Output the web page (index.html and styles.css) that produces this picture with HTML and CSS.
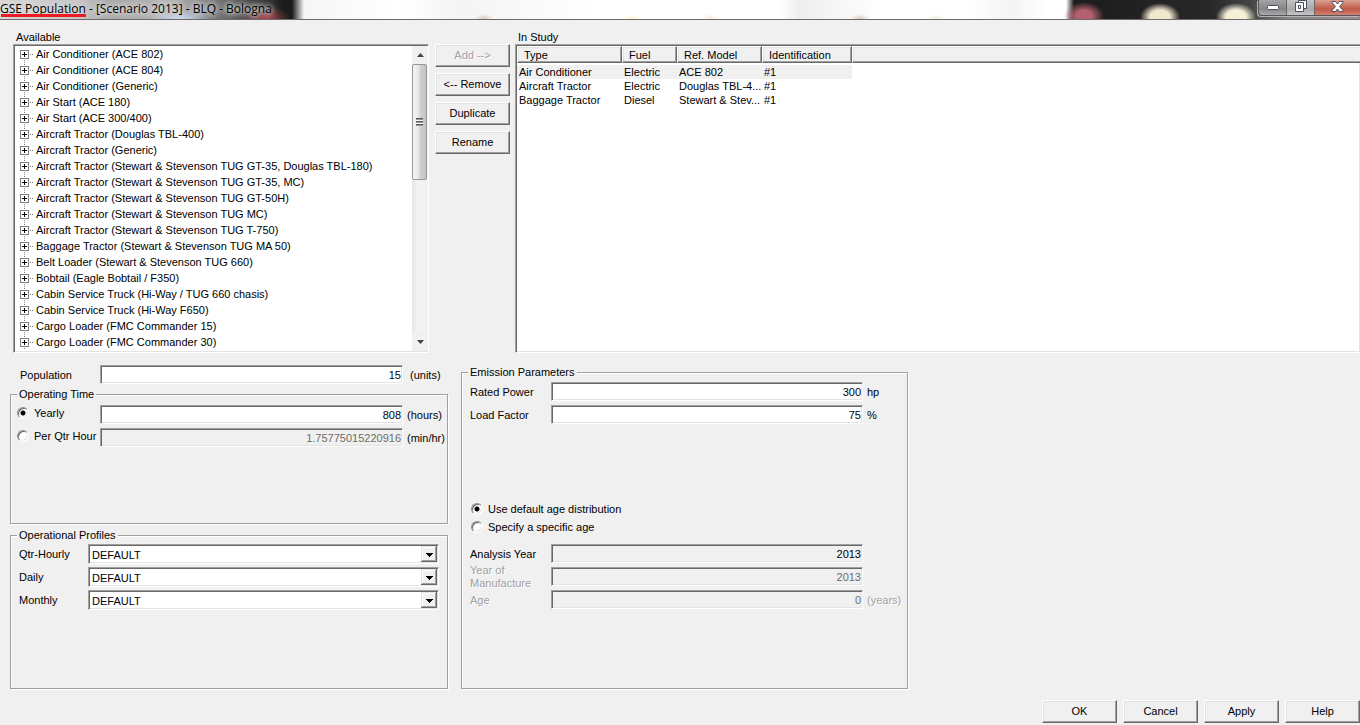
FILE: index.html
```html
<!DOCTYPE html>
<html lang="en">
<head>
<meta charset="utf-8">
<title>GSE Population - [Scenario 2013] - BLQ - Bologna</title>
<link rel="stylesheet" href="styles.css">
</head>
<body>
<header class="titlebar">
  <h1 class="title"><span class="marked">GSE Population</span> - [Scenario 2013] - BLQ - Bologna</h1>
  <div class="window-controls">
    <button class="win-btn win-min" aria-label="Minimize"><svg width="12" height="6" viewBox="0 0 12 6"><rect x=".5" y=".5" width="11" height="4" rx="1" fill="#fff" stroke="#4a4e60"/></svg></button>
    <button class="win-btn win-restore" aria-label="Restore"><svg width="12" height="12" viewBox="0 0 12 12" fill="#fff" stroke="#4a4e60"><path d="M3.500.5h8v8h-8z"/><path fill-rule="evenodd" d="M.5 2.500h8v9h-8zM3.500 5.500v3h2v-3z"/></svg></button>
    <button class="win-btn win-close" aria-label="Close"><svg width="13" height="11" viewBox="0 0 13 11"><path d="M1 .5h3.500l2 2.500 2-2.500H12v1L8.500 5.500 12 9.500v1H8.500l-2-2.500-2 2.500H1v-1l3.500-4L1 1.500z" fill="#fff" stroke="#4a4e60"/></svg></button>
  </div>
</header>

<main class="content">
  <div class="lists">
    <section class="list-column">
      <h2 class="caption">Available</h2>
      <div class="tree sunken">
        <ul class="tree-items">
          <li><button class="expander" aria-label="Expand"></button>Air Conditioner (ACE 802)</li>
          <li><button class="expander" aria-label="Expand"></button>Air Conditioner (ACE 804)</li>
          <li><button class="expander" aria-label="Expand"></button>Air Conditioner (Generic)</li>
          <li><button class="expander" aria-label="Expand"></button>Air Start (ACE 180)</li>
          <li><button class="expander" aria-label="Expand"></button>Air Start (ACE 300/400)</li>
          <li><button class="expander" aria-label="Expand"></button>Aircraft Tractor (Douglas TBL-400)</li>
          <li><button class="expander" aria-label="Expand"></button>Aircraft Tractor (Generic)</li>
          <li><button class="expander" aria-label="Expand"></button>Aircraft Tractor (Stewart &amp; Stevenson TUG GT-35, Douglas TBL-180)</li>
          <li><button class="expander" aria-label="Expand"></button>Aircraft Tractor (Stewart &amp; Stevenson TUG GT-35, MC)</li>
          <li><button class="expander" aria-label="Expand"></button>Aircraft Tractor (Stewart &amp; Stevenson TUG GT-50H)</li>
          <li><button class="expander" aria-label="Expand"></button>Aircraft Tractor (Stewart &amp; Stevenson TUG MC)</li>
          <li><button class="expander" aria-label="Expand"></button>Aircraft Tractor (Stewart &amp; Stevenson TUG T-750)</li>
          <li><button class="expander" aria-label="Expand"></button>Baggage Tractor (Stewart &amp; Stevenson TUG MA 50)</li>
          <li><button class="expander" aria-label="Expand"></button>Belt Loader (Stewart &amp; Stevenson TUG 660)</li>
          <li><button class="expander" aria-label="Expand"></button>Bobtail (Eagle Bobtail / F350)</li>
          <li><button class="expander" aria-label="Expand"></button>Cabin Service Truck (Hi-Way / TUG 660 chasis)</li>
          <li><button class="expander" aria-label="Expand"></button>Cabin Service Truck (Hi-Way F650)</li>
          <li><button class="expander" aria-label="Expand"></button>Cargo Loader (FMC Commander 15)</li>
          <li><button class="expander" aria-label="Expand"></button>Cargo Loader (FMC Commander 30)</li>
        </ul>
        <div class="scrollbar">
          <button class="scroll-arrow" aria-label="Scroll up"><svg width="7" height="4" viewBox="0 0 7 4"><path d="M0 4 3.500 0 7 4z" fill="#444"/></svg></button>
          <div class="scroll-track"><div class="scroll-thumb"><span class="grip"></span></div></div>
          <button class="scroll-arrow" aria-label="Scroll down"><svg width="7" height="4" viewBox="0 0 7 4"><path d="M0 0 3.500 4 7 0z" fill="#444"/></svg></button>
        </div>
      </div>
    </section>

    <div class="actions">
      <button class="btn" disabled>Add --&gt;</button>
      <button class="btn">&lt;-- Remove</button>
      <button class="btn">Duplicate</button>
      <button class="btn">Rename</button>
    </div>

    <section class="list-column">
      <h2 class="caption">In Study</h2>
      <div class="study sunken">
        <table class="study-table">
          <colgroup><col class="c-type"><col class="c-fuel"><col class="c-model"><col class="c-id"><col></colgroup>
          <thead>
            <tr><th>Type</th><th>Fuel</th><th>Ref. Model</th><th>Identification</th><th></th></tr>
          </thead>
          <tbody>
            <tr class="selected"><td>Air Conditioner</td><td>Electric</td><td>ACE 802</td><td>#1</td><td></td></tr>
            <tr><td>Aircraft Tractor</td><td>Electric</td><td>Douglas TBL-4...</td><td>#1</td><td></td></tr>
            <tr><td>Baggage Tractor</td><td>Diesel</td><td>Stewart &amp; Stev...</td><td>#1</td><td></td></tr>
          </tbody>
        </table>
      </div>
    </section>
  </div>

  <form class="details">
    <div class="details-left">
      <div class="field population">
        <label for="population">Population</label>
        <input class="box sunken" id="population" type="text" value="15">
        <span class="unit">(units)</span>
      </div>

      <fieldset class="group time-group">
        <legend>Operating Time</legend>
        <div class="field time">
          <label class="choice"><input type="radio" name="time" checked>Yearly</label>
          <input class="box sunken" type="text" value="808" aria-label="Yearly hours">
          <span class="unit">(hours)</span>
        </div>
        <div class="field time">
          <label class="choice"><input type="radio" name="time">Per Qtr Hour</label>
          <input class="box sunken" type="text" value="1.75775015220916" aria-label="Minutes per hour" disabled>
          <span class="unit">(min/hr)</span>
        </div>
      </fieldset>

      <fieldset class="group profile-group">
        <legend>Operational Profiles</legend>
        <div class="field profile">
          <label for="qtr">Qtr-Hourly</label>
          <select class="combo sunken" id="qtr"><option>DEFAULT</option></select>
        </div>
        <div class="field profile">
          <label for="daily">Daily</label>
          <select class="combo sunken" id="daily"><option>DEFAULT</option></select>
        </div>
        <div class="field profile">
          <label for="monthly">Monthly</label>
          <select class="combo sunken" id="monthly"><option>DEFAULT</option></select>
        </div>
      </fieldset>
    </div>

    <fieldset class="group emission-group">
      <legend>Emission Parameters</legend>
      <div class="field emission">
        <label for="power">Rated Power</label>
        <input class="box sunken" id="power" type="text" value="300">
        <span class="unit">hp</span>
      </div>
      <div class="field emission">
        <label for="load">Load Factor</label>
        <input class="box sunken" id="load" type="text" value="75">
        <span class="unit">%</span>
      </div>
      <div class="age-choices">
        <label class="choice"><input type="radio" name="age" checked>Use default age distribution</label>
        <label class="choice"><input type="radio" name="age">Specify a specific age</label>
      </div>
      <div class="field emission">
        <label for="analysis">Analysis Year</label>
        <input class="box sunken locked" id="analysis" type="text" value="2013" readonly>
      </div>
      <div class="field emission">
        <label class="dim" for="made">Year of Manufacture</label>
        <input class="box sunken" id="made" type="text" value="2013" disabled>
      </div>
      <div class="field emission">
        <label class="dim" for="age">Age</label>
        <input class="box sunken" id="age" type="text" value="0" disabled>
        <span class="unit dim">(years)</span>
      </div>
    </fieldset>
  </form>

  <footer class="footer">
    <button class="btn">OK</button>
    <button class="btn">Cancel</button>
    <button class="btn">Apply</button>
    <button class="btn">Help</button>
  </footer>
</main>
</body>
</html>
```

FILE: styles.css
```css
* { box-sizing: border-box; }

body {
  margin: 0;
  min-height: 100vh;
  display: flex;
  flex-direction: column;
  background: #f0f0f0;
  color: #000;
  font: 11px/14px "Liberation Sans", Arial, sans-serif;
}

button, input, select { font: inherit; color: inherit; margin: 0; }

/* Title bar */
.titlebar {
  display: flex;
  justify-content: space-between;
  align-items: flex-start;
  height: 20px;
  overflow: hidden;
  border-bottom: 1px solid #6e6a6c;
  background:
    radial-gradient(ellipse 24px 12px at 266px 18px, #a8444a, transparent),
    radial-gradient(ellipse 30px 10px at 180px 19px, #c8dcf4, transparent),
    radial-gradient(ellipse 10px 5px at 484px 19px, #dcc8c0, transparent),
    radial-gradient(ellipse 10px 5px at 632px 19px, #fbf4d4, transparent),
    radial-gradient(ellipse 10px 5px at 710px 19px, #f7ecd0, transparent),
    radial-gradient(ellipse 10px 5px at 860px 19px, #dcc8c0, transparent),
    radial-gradient(ellipse 12px 5px at 936px 19px, #f2f4d8, transparent),
    radial-gradient(ellipse 20px 14px at right 276px top 16px, #b4606e 40%, transparent),
    radial-gradient(ellipse 20px 14px at right 200px top 17px, #f0e8cc 50%, transparent),
    radial-gradient(ellipse 20px 14px at right 124px top 17px, #f4f0d8 50%, transparent),
    linear-gradient(to left, #9a8a88 0, #888 70px, #444 110px, #282828 150px, #1c1c1c 286px, transparent 294px),
    linear-gradient(to right, #d8d8d8 0, #c4c4c4 80px, #a8a8a8 110px, #b4b4b4 170px, #777 215px, #444 250px, #1c1c1c 284px, #1c1c1c 292px, #f6f6f6 304px, #fff 400px, #f4f4f4 460px, #fff 600px, #fff 780px, #eee 800px, #fff 880px, #fff 970px, #f4f4f4 1010px, #fff 1050px);
}

.title {
  margin: 0;
  font: 12px/17px "Open Sans", "Noto Sans", sans-serif;
  white-space: nowrap;
  text-shadow: 0 0 4px #ddd, 0 0 6px #ddd, 0 0 8px #ddd;
}

.marked { position: relative; }
.marked::after {
  content: "";
  position: absolute;
  left: 1px;
  right: 0;
  bottom: 0;
  height: 3px;
  background: #ed1c24;
}

.window-controls {
  display: flex;
  height: 16px;
  border: solid #55565c;
  border-width: 0 0 1px 1px;
  border-radius: 0 0 0 4px;
  box-shadow: -1px 1px 0 #b4b4b4;
  overflow: hidden;
}

.win-btn {
  display: flex;
  justify-content: center;
  align-items: flex-start;
  width: 28px;
  padding: 0;
  border: 0;
  border-right: 1px solid #666;
  background: linear-gradient(#a4a4a4, #868686 60%, #aaa);
}
.win-min { padding-top: 5px; }
.win-restore { background: linear-gradient(#c4c4c4, #a8a8a8 60%, #c8c8c8); }
.win-close {
  width: 45px;
  padding-top: 1px;
  border-right: 0;
  background: linear-gradient(#dca090, #c05a48 60%, #d08070);
}

/* Bevels */
.sunken {
  border: 1px solid;
  border-color: #a0a0a0 #fff #fff #a0a0a0;
  box-shadow: inset 1px 1px 0 #696969, inset -1px -1px 0 #e3e3e3;
}

.btn {
  min-width: 75px;
  height: 23px;
  padding: 0 0 1px;
  border: 1px solid;
  border-color: #fff #696969 #696969 #fff;
  border-radius: 0;
  background: #f0f0f0;
  box-shadow: inset -1px -1px 0 #a0a0a0, inset 1px 1px 0 #e3e3e3;
}
.btn:disabled, .dim { color: #a0a0a0; text-shadow: 1px 1px 0 #fff; }

/* Lists */
.content { flex: 1; display: flex; flex-direction: column; }

.lists {
  display: grid;
  grid-template-columns: 416fr 76px 845fr;
  column-gap: 5px;
  padding: 10px 0 0 13px;
}
.list-column { min-width: 0; display: flex; flex-direction: column; }

.caption { margin: 0; padding: 0 3px; font-size: 11px; font-weight: normal; }

.tree { display: flex; background: #fff; padding: 1px 0 1px 1px; }

.tree-items {
  flex: 1;
  min-width: 0;
  margin: 0;
  padding: 0 0 1px 5px;
  list-style: none;
  white-space: nowrap;
  overflow: hidden;
}
.tree-items li {
  display: flex;
  align-items: center;
  height: 16px;
  background:
    repeating-linear-gradient(to right, #808080 0 1px, transparent 1px 2px) 10px 8px / 3px 1px no-repeat,
    repeating-linear-gradient(to bottom, #808080 0 1px, transparent 1px 2px) 4px 0 / 1px 16px no-repeat;
}
.tree-items li:first-child { background-position: 10px 8px, 4px 8px; }

.expander {
  width: 9px;
  height: 9px;
  margin-right: 7px;
  padding: 0;
  border: 1px solid #808080;
  background:
    linear-gradient(#000, #000) center / 5px 1px no-repeat,
    linear-gradient(#000, #000) center / 1px 5px no-repeat,
    #fff;
}

.scrollbar { display: flex; flex-direction: column; width: 16px; background: #f0f0f0; }
.scroll-arrow {
  display: flex;
  align-items: center;
  justify-content: center;
  height: 18px;
  padding: 0;
  border: 0;
  background: none;
}
.scroll-track { flex: 1; background: linear-gradient(to right, #e6e6e6, #f2f2f2 30%); }
.scroll-thumb {
  display: flex;
  align-items: center;
  justify-content: center;
  width: 15px;
  height: 43%;
  border: 1px solid #979797;
  border-radius: 2px;
  background: linear-gradient(to right, #f5f5f5, #e6e6e6 45%, #d0d0d0 55%, #c4c4c4);
}
.grip {
  width: 7px;
  height: 8px;
  background: repeating-linear-gradient(#555 0 1px, #999 1px 2px, #fff 2px 3px);
}

.actions { display: flex; flex-direction: column; gap: 6px; padding: 14px 0 0 1px; }

.study { flex: 1; background: #fff; padding: 1px 0 1px 1px; border-right: 0; overflow: hidden; }
.study-table { width: 100%; table-layout: fixed; border-collapse: separate; border-spacing: 0; }
.c-type { width: 105px; }
.c-fuel { width: 55px; }
.c-model { width: 85px; }
.c-id { width: 90px; }
.study-table th {
  height: 17px;
  padding: 1px 6px 0;
  text-align: left;
  font-weight: normal;
  background: #f0f0f0;
  border: 1px solid;
  border-color: #fff #696969 #696969 #fff;
  box-shadow: inset -1px -1px 0 #a0a0a0, inset 1px 1px 0 #e3e3e3;
}
.study-table th:last-child { border-right: 0; box-shadow: inset 0 -1px 0 #a0a0a0, inset 1px 1px 0 #e3e3e3; }
.study-table tbody::before { content: ""; display: block; height: 2px; }
.study-table td { height: 14px; padding: 0 2px; white-space: nowrap; }
.selected td:not(:last-child) { background: #f0f0f0; }

/* Details */
.details {
  display: grid;
  grid-template-columns: minmax(0, 438px) minmax(0, 447px);
  gap: 13px;
  padding: 12px 10px 0;
}
.details-left { display: flex; flex-direction: column; }

.field { display: grid; align-items: center; min-height: 19px; }
.field + .field { margin-top: 4px; }
.population { grid-template-columns: 80px 1fr 45px; padding-left: 10px; margin-bottom: 3px; }
.population .unit { padding-left: 7px; }
.time { grid-template-columns: 83px 1fr 44px; padding-left: 6px; }
.time .unit { padding-left: 4px; }
.time .choice { padding-bottom: 3px; }
.profile { grid-template-columns: 69px 1fr; padding: 0 8px; }
.field.profile + .profile { margin-top: 3px; }
.emission { grid-template-columns: 81px 1fr 44px; padding-left: 8px; }
.emission .unit { padding-left: 4px; }
.emission label { padding-top: 1px; line-height: 13px; }
.emission .dim { margin: -4px 0; }

.box {
  width: 100%;
  min-width: 0;
  height: 19px;
  padding: 0 1px;
  border-radius: 0;
  text-align: right;
  background: #fff;
}
.box:disabled { background: #f0f0f0; color: #6d6d6d; }
.locked { background: #f0f0f0; }

.combo {
  appearance: none;
  width: 100%;
  height: 20px;
  padding: 1px 20px 0 3px;
  border-radius: 0;
  background: #fff url("data:image/svg+xml,%3Csvg xmlns='http://www.w3.org/2000/svg' width='16' height='16' shape-rendering='crispEdges'%3E%3Cpath fill='%23696969' d='M0 0h16v16H0z'/%3E%3Cpath fill='%23e3e3e3' d='M0 0h15v15H0z'/%3E%3Cpath fill='%23a0a0a0' d='M1 1h14v14H1z'/%3E%3Cpath fill='%23fff' d='M1 1h13v13H1z'/%3E%3Cpath fill='%23f0f0f0' d='M2 2h12v12H2z'/%3E%3Cpath d='M5 7h7v1H5zM6 8h5v1H6zM7 9h3v1H7zM8 10h1v1H8z'/%3E%3C/svg%3E") right 1px top 1px no-repeat;
}

.group {
  min-width: 0;
  margin: 0;
  padding: 4px 0 0;
  border: 1px solid #a0a0a0;
  box-shadow: 1px 1px 0 #fff, inset 1px 1px 0 #fff;
}
.group legend { margin-left: 6px; padding: 0 2px; background: #f0f0f0; }
.time-group { min-height: 137px; }
.profile-group { min-height: 161px; margin-top: 4px; padding-top: 2px; }
.emission-group { padding-top: 3px; }

.choice { display: flex; align-items: center; gap: 5px; white-space: nowrap; }
.choice input {
  appearance: none;
  flex: none;
  width: 12px;
  height: 12px;
  border: 1px solid;
  border-color: #909090 #fff #fff #909090;
  border-radius: 50%;
  background: #fff;
  box-shadow: inset 1px 1px 0 #696969, inset -1px -1px 0 #e3e3e3;
}
.choice input:checked { background: radial-gradient(circle at center, #000 2px, #fff 3px); }

.age-choices { display: flex; flex-direction: column; gap: 4px; padding: 78px 9px 10px; }

/* Footer */
.footer {
  display: flex;
  justify-content: flex-end;
  gap: 6px;
  margin-top: auto;
  padding: 10px 0 2px;
}
```
